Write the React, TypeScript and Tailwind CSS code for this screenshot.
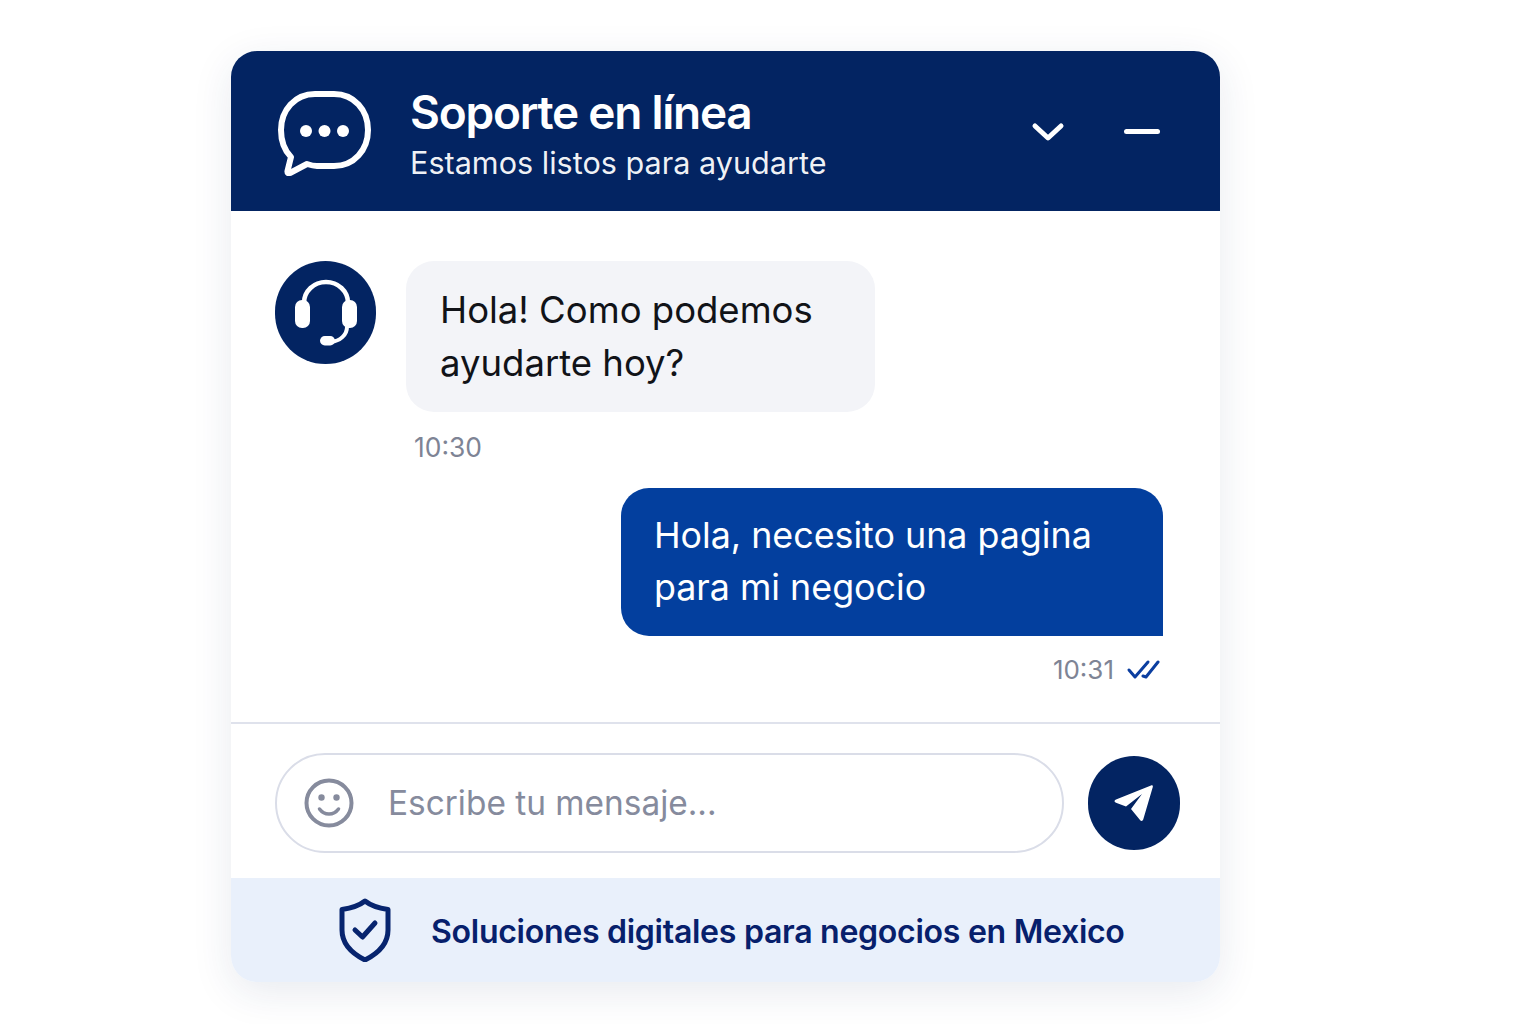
function ChatIcon() {
  return (
    <svg className="mt-[4px]" width="96" height="86" viewBox="0 0 96 86" fill="none">
      <path
        d="M38 4H57C77 4 91 20 91 40C91 60 77 76 57 76H40C36 76 33 75 30 74L13 83Q10 84 10.500 81L14 67C7 60 4 50 4 40C4 20 18 4 38 4Z"
        stroke="white"
        strokeWidth="6"
        strokeLinejoin="round"
      />
      <circle cx="29" cy="41" r="6" fill="white" />
      <circle cx="47.500" cy="41" r="6" fill="white" />
      <circle cx="66" cy="41" r="6" fill="white" />
    </svg>
  );
}

function HeadsetIcon() {
  return (
    <svg width="64" height="68" viewBox="0 0 64 68" fill="none">
      <path d="M10 27v-3C10 12 20 3 32 3s22 9 22 21v3" stroke="white" strokeWidth="4.500" />
      <rect x="1" y="21" width="15" height="28" rx="7" fill="white" />
      <rect x="48" y="21" width="15" height="28" rx="7" fill="white" />
      <path d="M53 48c0 8-7 14-16 15H30" stroke="white" strokeWidth="4" strokeLinecap="round" />
      <rect x="26" y="57" width="15" height="9.500" rx="4.750" fill="white" />
    </svg>
  );
}

function ChevronDown() {
  return (
    <svg width="34" height="22" viewBox="0 0 34 22" fill="none">
      <path d="M4 6l13 12L30 6" stroke="white" strokeWidth="5" strokeLinecap="round" strokeLinejoin="round" />
    </svg>
  );
}

function DoubleCheck() {
  return (
    <svg width="34" height="22" viewBox="0 0 34 22" fill="none">
      <path d="M3 11l6 7L22 3" stroke="#0b3ea0" strokeWidth="3" strokeLinecap="round" strokeLinejoin="round" />
      <path d="M17 17l3 1L32 3" stroke="#0b3ea0" strokeWidth="3" strokeLinecap="round" strokeLinejoin="round" />
    </svg>
  );
}

function Smiley() {
  return (
    <svg width="50" height="50" viewBox="0 0 50 50" fill="none">
      <circle cx="25" cy="25" r="22.500" stroke="#868b9d" strokeWidth="4" />
      <circle cx="17.500" cy="19.500" r="3.200" fill="#868b9d" />
      <circle cx="32.500" cy="19.500" r="3.200" fill="#868b9d" />
      <path d="M15.500 31c2.500 3.500 6 5 9.500 5s7-1.500 9.500-5" stroke="#868b9d" strokeWidth="3.500" strokeLinecap="round" />
    </svg>
  );
}

function SendIcon() {
  return (
    <svg width="42" height="38" viewBox="0 0 42 38" fill="none">
      <path
        d="M38 1.500 3 15.500c-2 .8-2 2.500 0 3.300l10 3.700L29 10 18 25l9 11c1.200 1.500 2.800 1 3.300-.8L39.800 3c.4-1.300-.6-2-1.800-1.500Z"
        fill="white"
      />
    </svg>
  );
}

function ShieldIcon() {
  return (
    <svg width="52" height="64" viewBox="0 0 52 64" fill="none">
      <path
        d="M26 3c5 4 13 7 23 8.500V32c0 14-9 23-23 30C12 55 3 46 3 32V11.500C13 10 21 7 26 3Z"
        stroke="#07246e"
        strokeWidth="5"
        strokeLinejoin="round"
      />
      <path d="M16 32l7.500 7L36 25" stroke="#07246e" strokeWidth="5" strokeLinecap="round" strokeLinejoin="round" />
    </svg>
  );
}

export default function App() {
  return (
    <div className="min-h-screen bg-white pl-[231px] pt-[51px] font-['Inter',sans-serif]">
      <div className="w-[989px] rounded-[26px] bg-white shadow-[0_10px_40px_rgba(30,50,100,0.10)] overflow-hidden">
        <div className="h-[160px] bg-[#032462] flex items-center pl-[46px] pr-[60px]">
          <ChatIcon />
          <div className="ml-[37px] mt-[5px] flex flex-col">
            <span className="text-[46px] leading-[56px] font-semibold text-white tracking-[-1.25px]">Soporte en línea</span>
            <span className="mt-[3px] text-[30.600px] leading-[40px] text-white/95">Estamos listos para ayudarte</span>
          </div>
          <div className="ml-auto flex items-center gap-[59px]">
            <ChevronDown />
            <div className="w-[36px] h-[5px] rounded-full bg-white" />
          </div>
        </div>

        <div className="h-[511px] pt-[50px] pl-[44px] pr-[57px] flex flex-col">
          <div className="flex gap-[30px]">
            <div className="w-[101px] h-[103px] rounded-full bg-[#032462] flex items-center justify-center">
              <HeadsetIcon />
            </div>
            <div className="w-[469px] h-[151px] rounded-[28px] bg-[#f3f4f8] px-[34px] pt-[23px] text-[36.500px] leading-[53px] text-[#111318]">
              Hola! Como podemos
              <br />
              ayudarte hoy?
            </div>
          </div>
          <div className="ml-[139px] mt-[17px] text-[26.400px] leading-[36px] text-[#7e8495]">10:30</div>
          <div className="self-end w-[542px] h-[148px] mt-[23px] rounded-[28px] rounded-br-none bg-[#033f9e] pl-[33px] pt-[21px] text-[35.800px] leading-[52px] text-white">
            Hola, necesito una pagina
            <br />
            para mi negocio
          </div>
          <div className="self-end mt-[16px] flex items-center gap-[12px] mr-[3px]">
            <span className="text-[26px] leading-[36px] text-[#7e8495]">10:31</span>
            <DoubleCheck />
          </div>
        </div>

        <div className="h-[156px] border-t-2 border-[#dfe2ec] pl-[44px] pt-[4px] flex items-center">
          <div className="w-[789px] h-[100px] rounded-full border-2 border-[#dadde8] bg-white flex items-center pl-[27px]">
            <Smiley />
            <span className="ml-[34px] text-[33.400px] text-[#868b9d]">Escribe tu mensaje...</span>
          </div>
          <div className="ml-[24px] w-[92px] h-[94px] rounded-full bg-[#032462] flex items-center justify-center">
            <SendIcon />
          </div>
        </div>

        <div className="h-[104px] bg-[#e9f0fb] flex items-center pl-[108px]">
          <ShieldIcon />
          <span className="ml-[40px] mt-[4px] text-[32.100px] font-semibold text-[#07206c] tracking-[-0.3px]">
            Soluciones digitales para negocios en Mexico
          </span>
        </div>
      </div>
    </div>
  );
}
